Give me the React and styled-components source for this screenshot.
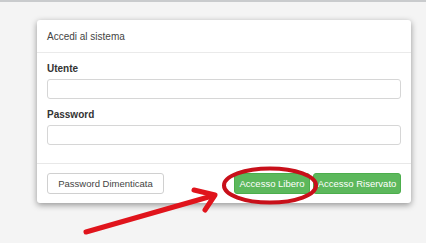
import React from "react";
import styled, { createGlobalStyle } from "styled-components";

const GlobalStyle = createGlobalStyle`
  html, body {
    margin: 0;
    padding: 0;
    background: #f4f4f4;
    font-family: "Liberation Sans", Arial, sans-serif;
  }
`;

const Page = styled.div`
  position: relative;
  width: 426px;
  height: 243px;
  overflow: hidden;
  border-top: 2px solid #c9cbcd;
  box-sizing: border-box;
  padding: 18px 0 0 37px;
`;

const Panel = styled.div`
  width: 374px;
  background: #fff;
  border-radius: 3px;
  box-shadow: 0 2px 6px rgba(0, 0, 0, 0.4);
`;

const Heading = styled.div`
  height: 32px;
  display: flex;
  align-items: center;
  padding: 0 10px;
  font-size: 10px;
  color: #444;
  border-bottom: 1px solid #eaeaea;
`;

const Body = styled.div`
  padding: 10px 10px 18px;
`;

const Group = styled.div`
  display: flex;
  flex-direction: column;
  gap: 4px;
  & + & {
    margin-top: 10px;
  }
`;

const Label = styled.label`
  font-size: 10px;
  font-weight: bold;
  line-height: 12px;
  color: #333;
`;

const Input = styled.input`
  box-sizing: border-box;
  height: 20px;
  width: 100%;
  border: 1px solid #d6d6d6;
  border-radius: 3px;
  background: #fff;
`;

const Footer = styled.div`
  display: flex;
  align-items: center;
  padding: 9px 10px;
  border-top: 1px solid #e8e8e8;
`;

const Button = styled.button`
  box-sizing: border-box;
  height: 21px;
  width: ${(p) => p.$w}px;
  padding: 0;
  font-family: "Liberation Sans", Arial, sans-serif;
  font-size: 9.5px;
  border-radius: 3px;
  border: 1px solid ${(p) => (p.$green ? "#4cae4c" : "#d0d0d0")};
  background: ${(p) => (p.$green ? "#5cb85c" : "#fff")};
  color: ${(p) => (p.$green ? "#fff" : "#444")};
`;

const Actions = styled.div`
  margin-left: auto;
  display: flex;
  gap: 3px;
`;

const Marks = styled.svg`
  position: absolute;
  left: 0;
  top: 0;
  pointer-events: none;
`;

export default function App() {
  return (
    <>
      <GlobalStyle />
      <Page>
        <Panel>
          <Heading>Accedi al sistema</Heading>
          <Body>
            <Group>
              <Label>Utente</Label>
              <Input />
            </Group>
            <Group>
              <Label>Password</Label>
              <Input type="password" />
            </Group>
          </Body>
          <Footer>
            <Button $w={117}>Password Dimenticata</Button>
            <Actions>
              <Button $green $w={76}>Accesso Libero</Button>
              <Button $green $w={88}>Accesso Riservato</Button>
            </Actions>
          </Footer>
        </Panel>
        <Marks width="426" height="243" viewBox="0 0 426 243">
          <ellipse cx="270" cy="183.5" rx="46" ry="17" fill="none" stroke="#c8101a" strokeWidth="4" />
          <g stroke="#e0141c" strokeWidth="5" strokeLinecap="round" strokeLinejoin="round" fill="none">
            <line x1="86" y1="230" x2="212" y2="194" />
            <polyline points="194,188 215,193 205,208" />
          </g>
        </Marks>
      </Page>
    </>
  );
}
